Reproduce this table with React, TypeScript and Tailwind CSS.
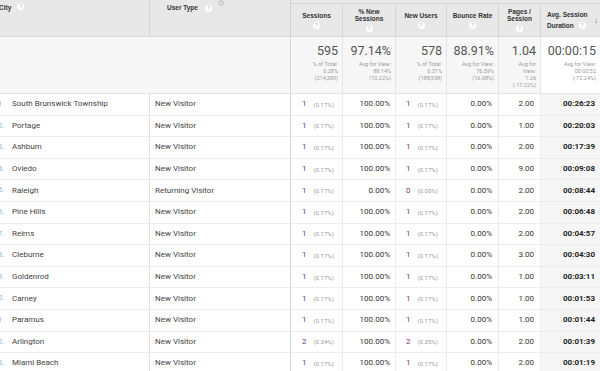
import React from "react";

const cols = "grid grid-cols-[150px_141px_52px_53px_51px_52px_42px_59px]";

const rows = [
  { city: "South Brunswick Township", type: "New Visitor", s: "1", sp: "(0.17%)", ns: "100.00%", nu: "1", nup: "(0.17%)", br: "0.00%", pps: "2.00", dur: "00:26:23" },
  { city: "Portage", type: "New Visitor", s: "1", sp: "(0.17%)", ns: "100.00%", nu: "1", nup: "(0.17%)", br: "0.00%", pps: "1.00", dur: "00:20:03" },
  { city: "Ashburn", type: "New Visitor", s: "1", sp: "(0.17%)", ns: "100.00%", nu: "1", nup: "(0.17%)", br: "0.00%", pps: "2.00", dur: "00:17:39" },
  { city: "Oviedo", type: "New Visitor", s: "1", sp: "(0.17%)", ns: "100.00%", nu: "1", nup: "(0.17%)", br: "0.00%", pps: "9.00", dur: "00:09:08" },
  { city: "Raleigh", type: "Returning Visitor", s: "1", sp: "(0.17%)", ns: "0.00%", nu: "0", nup: "(0.00%)", br: "0.00%", pps: "2.00", dur: "00:08:44" },
  { city: "Pine Hills", type: "New Visitor", s: "1", sp: "(0.17%)", ns: "100.00%", nu: "1", nup: "(0.17%)", br: "0.00%", pps: "2.00", dur: "00:06:48" },
  { city: "Reims", type: "New Visitor", s: "1", sp: "(0.17%)", ns: "100.00%", nu: "1", nup: "(0.17%)", br: "0.00%", pps: "2.00", dur: "00:04:57" },
  { city: "Cleburne", type: "New Visitor", s: "1", sp: "(0.17%)", ns: "100.00%", nu: "1", nup: "(0.17%)", br: "0.00%", pps: "3.00", dur: "00:04:30" },
  { city: "Goldenrod", type: "New Visitor", s: "1", sp: "(0.17%)", ns: "100.00%", nu: "1", nup: "(0.17%)", br: "0.00%", pps: "1.00", dur: "00:03:11" },
  { city: "Carney", type: "New Visitor", s: "1", sp: "(0.17%)", ns: "100.00%", nu: "1", nup: "(0.17%)", br: "0.00%", pps: "1.00", dur: "00:01:53" },
  { city: "Paramus", type: "New Visitor", s: "1", sp: "(0.17%)", ns: "100.00%", nu: "1", nup: "(0.17%)", br: "0.00%", pps: "1.00", dur: "00:01:44" },
  { city: "Arlington", type: "New Visitor", s: "2", sp: "(0.34%)", ns: "100.00%", nu: "2", nup: "(0.35%)", br: "0.00%", pps: "2.00", dur: "00:01:39" },
  { city: "Miami Beach", type: "New Visitor", s: "1", sp: "(0.17%)", ns: "100.00%", nu: "1", nup: "(0.17%)", br: "0.00%", pps: "2.00", dur: "00:01:19" },
];

const summary = [
  { big: "595", sub: ["% of Total:", "0.28%", "(214,389)"] },
  { big: "97.14%", sub: ["Avg for View:", "88.14%", "(10.22%)"] },
  { big: "578", sub: ["% of Total:", "0.31%", "(188,958)"] },
  { big: "88.91%", sub: ["Avg for View:", "76.59%", "(16.08%)"] },
  { big: "1.04", sub: ["Avg for", "View:", "1.26", "(-17.22%)"] },
  { big: "00:00:15", sub: ["Avg for View:", "00:00:52", "(-72.24%)"] },
];

const Help = () => (
  <span className="inline-flex items-center justify-center w-[7px] h-[7px] rounded-full bg-white text-[5px] font-bold leading-none text-[#c8c8c8]">
    ?
  </span>
);

const MetricHead = ({ lines }: { lines: string[] }) => (
  <div className="mt-[3px] border-t border-r border-t-[#d3d3d3] border-r-[#d6d6d6] flex flex-col items-center justify-center gap-[3px] text-center">
    <div className="leading-[7px]">
      {lines.map((l) => (
        <div key={l}>{l}</div>
      ))}
    </div>
    <Help />
  </div>
);

export default function App() {
  return (
    <div className="w-[600px] h-[371px] overflow-hidden bg-white text-[#333]" style={{ fontFamily: "Roboto, 'Liberation Sans', sans-serif" }}>
      {/* Header */}
      <div className={`${cols} h-[37px] bg-[#e8e8e8] border-b border-[#d9d9d9] text-[6.5px] font-bold text-[#333]`} style={{ fontFamily: "'Liberation Sans', Arial, sans-serif" }}>
        <div className="border-r border-[#d6d6d6] flex items-start gap-[6px] pt-[3px]">
          <span className="-ml-[1px]">City</span>
          <Help />
        </div>
        <div className="border-r border-[#d0d0d0] flex items-start pt-[3px] pl-[17px]">
          <span>User Type</span>
          <span className="ml-[7px]"><Help /></span>
          <span className="ml-[6px] -mt-[3px] inline-flex items-center justify-center w-[6px] h-[6px] rounded-full bg-[#cfcfcf] text-[5px] leading-none text-[#e8e8e8]">×</span>
        </div>
        <MetricHead lines={["Sessions"]} />
        <MetricHead lines={["% New", "Sessions"]} />
        <MetricHead lines={["New Users"]} />
        <MetricHead lines={["Bounce Rate"]} />
        <MetricHead lines={["Pages /", "Session"]} />
        <div className="mt-[3px] border-t border-[#d3d3d3] flex items-center pl-[6px] relative">
          <div className="leading-[11px]">
            <div>Avg. Session</div>
            <div className="flex items-center gap-[5px]">
              Duration <Help />
            </div>
          </div>
          <span className="absolute right-[2px] top-[11px] text-[8px] text-[#666] font-normal">↓</span>
        </div>
      </div>

      {/* Summary */}
      <div className={`${cols} h-[57px] border-b border-[#e4e4e4]`}>
        <div className="bg-[#f7f7f7]" />
        <div className="bg-[#f7f7f7] border-r border-[#d6d6d6]" />
        {summary.map((m, i) => (
          <div
            key={m.big}
            className={`${i === 5 ? "bg-white" : "bg-[#f7f7f7] border-r border-[#e6e6e6]"} flex flex-col items-end pr-[4px] pt-[7px] text-right`}
          >
            <div className="text-[12.5px] leading-[14px] text-[#555]">{m.big}</div>
            <div className="mt-[3px] text-[5.5px] leading-[7px] text-[#9a9a9a]">
              {m.sub.map((s) => (
                <div key={s}>{s}</div>
              ))}
            </div>
          </div>
        ))}
      </div>

      {/* Rows */}
      {rows.map((r, i) => (
        <div key={r.city} className={`${cols} h-[21.6px] border-b border-[#ececec] text-[8px] items-stretch`}>
          <div className="flex items-center border-r border-[#e0e0e0] text-[#444] overflow-hidden">
            <span className="w-[12px] shrink-0 text-right -ml-[8px] mr-[8px] text-[#8fb3d9] text-[7px]">{i + 1}.</span>
            <span>{r.city}</span>
          </div>
          <div className="flex items-center pl-[5px] border-r border-[#d6d6d6] text-[#444]">{r.type}</div>
          <div className="flex items-center pl-[11px] gap-[7px] border-r border-[#ececec]">
            <span className="text-[#7a3a72]">{r.s}</span>
            <span className="text-[6px] text-[#999]">{r.sp}</span>
          </div>
          <div className="flex items-center justify-end pr-[5px] border-r border-[#ececec]">{r.ns}</div>
          <div className="flex items-center pl-[10px] gap-[7px] border-r border-[#ececec]">
            <span className="text-[#7a3a72]">{r.nu}</span>
            <span className="text-[6px] text-[#999]">{r.nup}</span>
          </div>
          <div className="flex items-center justify-end pr-[6px] border-r border-[#ececec]">{r.br}</div>
          <div className="flex items-center justify-end pr-[6px] border-r border-[#ececec]">{r.pps}</div>
          <div className="flex items-center justify-end pr-[5px] bg-[#f6f6f6] font-bold text-[#222]">{r.dur}</div>
        </div>
      ))}
    </div>
  );
}
